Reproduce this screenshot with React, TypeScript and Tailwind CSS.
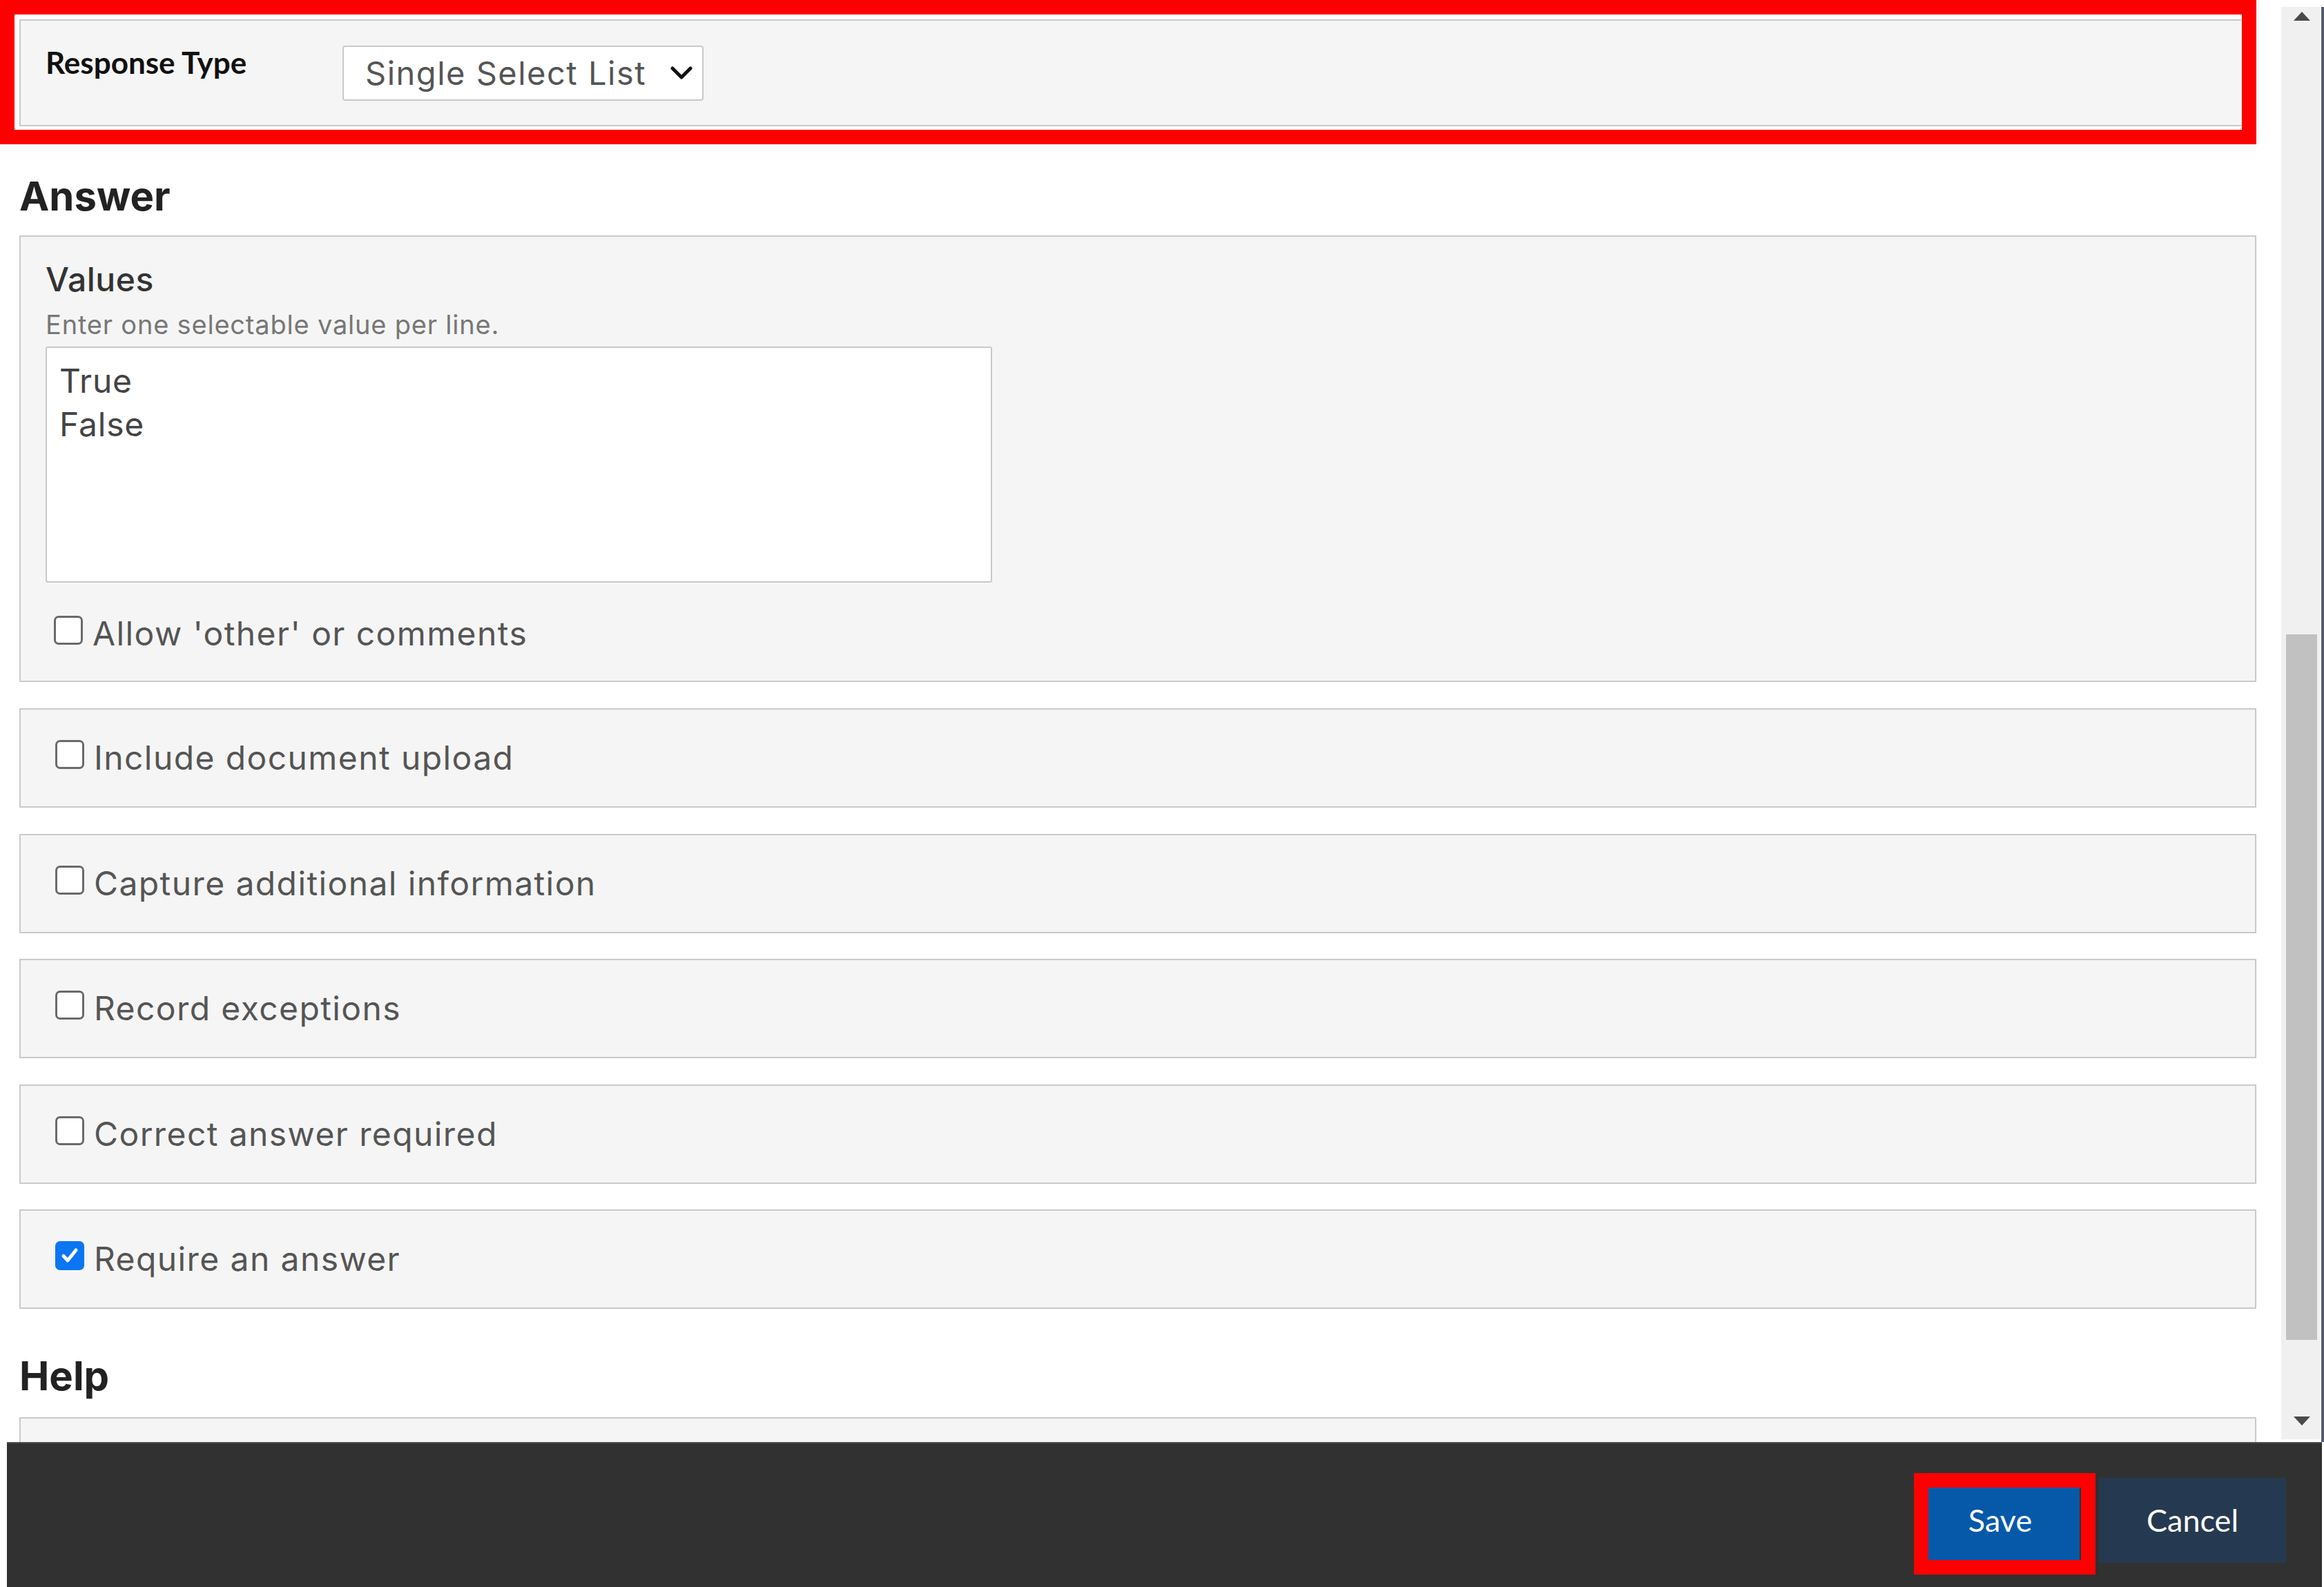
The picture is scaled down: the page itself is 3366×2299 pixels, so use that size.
import React from 'react';

const Box = ({ checked }: { checked?: boolean }) =>
  checked ? (
    <span className="w-[42px] h-[42px] mb-[10px] shrink-0 rounded-[7px] bg-[#0b75f2] flex items-center justify-center">
      <svg width="30" height="30" viewBox="0 0 30 30">
        <path d="M6 15.5 L12 22 L24 7" fill="none" stroke="#fff" strokeWidth="5" strokeLinecap="round" strokeLinejoin="round" />
      </svg>
    </span>
  ) : (
    <span className="w-[42px] h-[42px] mb-[10px] shrink-0 rounded-[7px] border-[3px] border-[#6a6a6a] bg-white" />
  );

const OptionPanel = ({ label, checked, first }: { label: string; checked?: boolean; first?: boolean }) => (
  <div
    className={
      first
        ? 'mt-[38px] h-[144px] shrink-0 border-2 border-[#cacaca] bg-[#f5f5f5] flex items-center pl-[50px]'
        : 'mt-[37.5px] h-[144px] shrink-0 border-2 border-[#cacaca] bg-[#f5f5f5] flex items-center pl-[50px]'
    }
  >
    <Box checked={checked} />
    <span className="ml-[14px] text-[48px] leading-[58px] tracking-[1.4px] text-[#555]">{label}</span>
  </div>
);

const Arrow = ({ up }: { up?: boolean }) => (
  <svg width="24" height="13" viewBox="0 0 24 13">
    <path d={up ? 'M0 13 L12 0 L24 13 Z' : 'M0 0 L24 0 L12 13 Z'} fill="#4a4a4a" />
  </svg>
);

export default function App() {
  return (
    <div className="relative w-[3366px] h-[2299px] overflow-hidden bg-white flex flex-col font-['Inter','Noto_Sans',sans-serif]">
      <div className="flex h-[2089px] shrink-0">
        {/* scrollable form */}
        <div className="w-[3304px] h-[2089px] overflow-hidden pl-[28px] pr-[36px] flex flex-col">
          <div className="mt-[28px] h-[155px] shrink-0 border-2 border-[#cacaca] bg-[#f5f5f5] flex items-start pt-[34px] pl-[36px]">
            <div className="w-[430px] text-[44px] leading-[53px] font-bold text-[#111] font-['Lato','Liberation_Sans',sans-serif]">
              Response Type
            </div>
            <div className="mt-[2px] w-[523px] h-[80px] bg-white border-2 border-[#c9c9c9] rounded-[4px] flex items-center justify-between pl-[31px] pr-[14px]">
              <span className="text-[47px] leading-[56px] tracking-[1.5px] text-[#555]">Single Select List</span>
              <svg width="32" height="20" viewBox="0 0 32 20">
                <path d="M3 3 L16 16 L29 3" fill="none" stroke="#111" strokeWidth="5" strokeLinecap="round" strokeLinejoin="round" />
              </svg>
            </div>
          </div>

          <div className="mt-[66px] text-[58px] leading-[70px] font-bold text-[#222]">Answer</div>

          <div className="mt-[22px] h-[647px] shrink-0 border-2 border-[#cacaca] bg-[#f5f5f5] pt-[33px] pl-[36px] flex flex-col">
            <div className="text-[48px] leading-[58px] font-medium tracking-[0.5px] text-[#333]">Values</div>
            <div className="mt-[13px] text-[38px] leading-[46px] tracking-[0.8px] text-[#777]">Enter one selectable value per line.</div>
            <textarea
              readOnly
              defaultValue={'True\nFalse'}
              className="mt-[9px] w-[1371px] h-[342px] shrink-0 border-2 border-[#c8c8c8] rounded-[3px] bg-white px-[18px] py-[16px] text-[48px] leading-[63px] tracking-[0.8px] text-[#444] resize-none outline-none font-['Inter','Noto_Sans',sans-serif]"
            />
            <div className="mt-[45px] h-[58px] flex items-center pl-[12px]">
              <Box />
              <span className="ml-[14px] text-[48px] leading-[58px] tracking-[1.4px] text-[#555]">Allow 'other' or comments</span>
            </div>
          </div>

          <OptionPanel first label="Include document upload" />
          <OptionPanel label="Capture additional information" />
          <OptionPanel label="Record exceptions" />
          <OptionPanel label="Correct answer required" />
          <OptionPanel label="Require an answer" checked />

          <div className="mt-[62px] text-[58px] leading-[70px] font-bold text-[#222]">Help</div>
          <div className="mt-[25px] h-[200px] shrink-0 border-2 border-[#cacaca] bg-[#f5f5f5]" />
        </div>

        {/* scrollbar */}
        <div className="mt-[10px] w-[56px] h-[2075px] bg-[#f0f0f0] flex flex-col">
          <div className="h-[40px] flex justify-center pt-[7px] pl-[4px]">
            <Arrow up />
          </div>
          <div className="flex-1 pt-[869px] pl-[7px]">
            <div className="w-[45px] h-[1022px] bg-[#c1c1c1]" />
          </div>
          <div className="h-[40px] flex justify-center pt-[7px] pl-[4px]">
            <Arrow />
          </div>
        </div>
        <div className="ml-[2px] mt-[10px] w-[4px] bg-[#565a74]" />
      </div>

      {/* footer */}
      <div className="h-[210px] ml-[10px] mr-[3px] bg-[#313131] border-t-2 border-[#4d4d4d] flex justify-end items-start pt-[50px] pr-[52px] gap-[28px] font-['Lato','Liberation_Sans',sans-serif]">
        <button className="w-[230px] h-[123px] bg-[#0559a8] text-white text-[45px]">Save</button>
        <button className="w-[271px] h-[123px] bg-[#253a50] text-white text-[45px]">Cancel</button>
      </div>

      {/* highlight annotations */}
      <div className="absolute left-0 top-0 w-[3268px] h-[209px] border-[21px] border-[#ff0000]" />
      <div className="absolute left-[2772px] top-[2134px] w-[263px] h-[147px] border-[21px] border-[#ff0000]" />
    </div>
  );
}
